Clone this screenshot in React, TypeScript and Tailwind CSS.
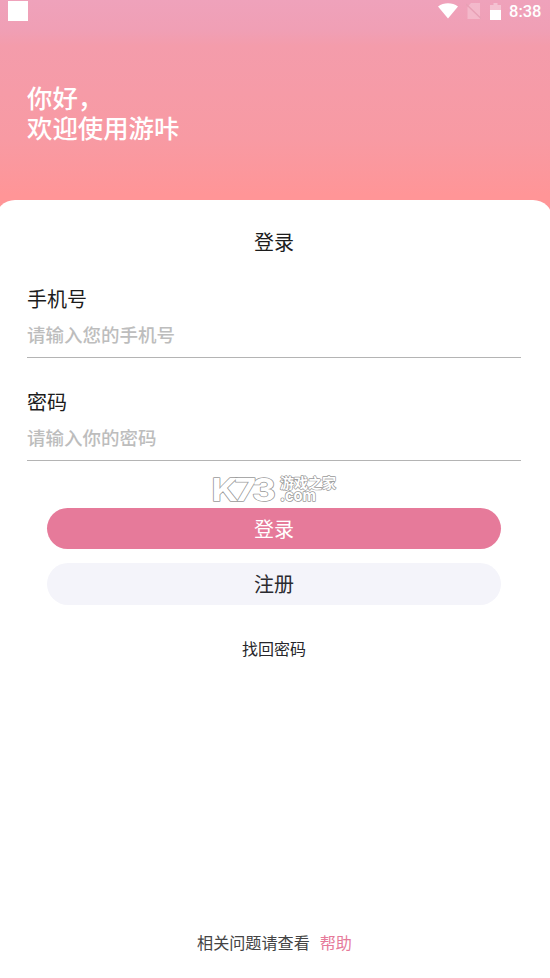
import { useState } from 'react'

interface FieldProps {
  label: string
  placeholder: string
  type: string
  value: string
  onChange: (value: string) => void
}

function Field({ label, placeholder, type, value, onChange }: FieldProps) {
  return (
    <label className="block h-[103px]">
      <span className="block h-[30px] text-[20px] leading-[30px] text-[#1c1c1c]">{label}</span>
      <input
        type={type}
        value={value}
        onChange={(e) => onChange(e.target.value)}
        placeholder={placeholder}
        className="mt-[6px] block h-[38px] w-full border-b border-[#b4b4b4] pb-[9px] text-[18.5px] font-medium leading-[28px] text-[#1c1c1c] placeholder-[#bdbdbd] outline-none"
      />
    </label>
  )
}

function StatusBar() {
  return (
    <div className="flex h-[22px] items-start justify-between pl-2 pr-[6px] pt-px text-white">
      <div className="size-5 bg-white" />
      <div className="flex h-[20px] items-center">
        <svg className="mr-[8px] h-[16px] w-[20px]" viewBox="0 0 20 16" fill="currentColor">
          <path d="M0 3.4C5.8-.8 14.2-.8 20 3.4L10 15.5z" />
        </svg>
        <svg className="mr-[9px] h-[16px] w-[15px]" viewBox="0 0 15 16">
          <path d="M5 0h9v16H1.5V4z" fill="#fff" opacity=".25" />
          <path d="M0 1l15 14.5" stroke="#e7a0b5" strokeWidth="1.3" />
        </svg>
        <svg className="mr-[8px] h-[17px] w-[11px]" viewBox="0 0 11 17" fill="#fff">
          <path d="M3.5 0h4v2H11v5H0V2h3.5z" opacity=".35" />
          <path d="M0 7h11v10H0z" />
        </svg>
        <span className="w-[35px] whitespace-nowrap pt-[2px] font-[Roboto,sans-serif] text-[16.5px] font-medium leading-[20px]">8:38</span>
      </div>
    </div>
  )
}

function Watermark() {
  return (
    <svg className="mx-auto block h-[42px] w-[126px] overflow-visible" viewBox="0 -8 126 42" fill="#fff" stroke="#9a9a9a" strokeLinejoin="round">
      <text transform="translate(0.5 28.5) scale(1.19 1)" fontFamily="Inter, sans-serif" fontWeight="700" fontSize="31" letterSpacing="-2.9" strokeWidth="1.5" paintOrder="stroke">K73</text>
      <text x="69" y="16" fontFamily="'Noto Sans CJK SC', sans-serif" fontWeight="700" fontSize="14" textLength="56" strokeWidth="1.4" paintOrder="stroke">游戏之家</text>
      <text x="69" y="28.5" fontFamily="Inter, sans-serif" fontWeight="700" fontSize="16" textLength="36" lengthAdjust="spacingAndGlyphs" strokeWidth="1.6" paintOrder="stroke">.com</text>
    </svg>
  )
}

export default function App() {
  const [phone, setPhone] = useState('')
  const [password, setPassword] = useState('')

  return (
    <div className="flex h-[978px] w-[550px] flex-col overflow-hidden bg-[linear-gradient(180deg,#efa2bb_0px,#f09fb5_30px,#f49cab_46px,#f89aa3_140px,#ff9597_195px)] font-['Noto_Sans_CJK_SC',sans-serif]">
      <StatusBar />

      <h1 className="h-[178px] pl-[27px] pt-[60px] text-[25.4px] font-medium leading-[30px] text-white">
        你好，
        <br />
        欢迎使用游咔
      </h1>

      <main className="-ml-[5px] -mr-[3px] flex flex-1 flex-col rounded-t-[20px] bg-white pl-[32px] pr-[32px] pt-[27px]">
        <h2 className="mb-[27px] h-[30px] text-center text-[20px] leading-[30px] text-[#1c1c1c]">登录</h2>

        <Field label="手机号" placeholder="请输入您的手机号" type="tel" value={phone} onChange={setPhone} />
        <Field label="密码" placeholder="请输入你的密码" type="password" value={password} onChange={setPassword} />

        <div className="-mt-[26px] h-[44px]">
          <Watermark />
        </div>

        {/* ボタン */}
        <div className="flex flex-col gap-[14px] px-5">
          <button className="h-[41px] rounded-full bg-[#e67a9a] text-[20px] leading-[41px] text-white">登录</button>
          <button className="h-[42px] rounded-full bg-[#f4f4fa] text-[20px] leading-[42px] text-[#2b2b30]">注册</button>
        </div>

        <a className="mt-[31px] text-center text-[16px] leading-[24px] text-[#26262a]">找回密码</a>

        <p className="mb-[24px] mt-auto flex justify-center gap-[10px] pl-px text-[16.1px] leading-[24px] text-[#444]">
          相关问题请查看
          <a className="text-[#e67a9a]">帮助</a>
        </p>
      </main>
    </div>
  )
}
